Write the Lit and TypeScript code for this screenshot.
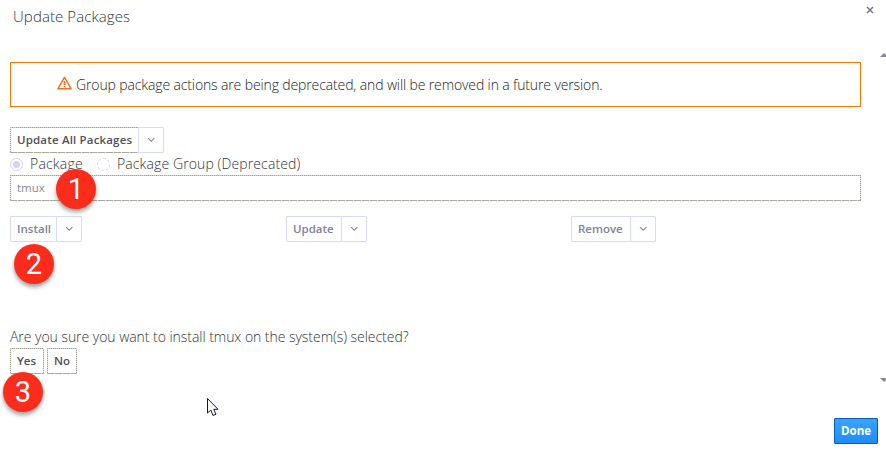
import { LitElement, html, css, svg } from "lit";
import { customElement, property } from "lit/decorators.js";

const chevron = svg`<path d="M1 1.2 L4.2 4.2 L7.4 1.2" fill="none" stroke="#8585a0" stroke-width="1.1"/>`;

const ditheredBorder = css`
  border: 0;
  background:
    repeating-linear-gradient(90deg, #a2a294 0 1px, #d0d0cc 1px 2px) top / 100% 1px no-repeat,
    repeating-linear-gradient(90deg, #aaaa9b 0 7px, #d9d9f0 7px 8px) bottom / 100% 1px no-repeat,
    repeating-linear-gradient(#a2a294 0 1px, #dcdcdc 1px 2px) left / 1px 100% no-repeat,
    repeating-linear-gradient(#a2a294 0 1px, #dcdcdc 1px 2px) right / 1px 100% no-repeat,
    #fff;
`;

@customElement("action-button")
class ActionButton extends LitElement {
  static styles = css`
    :host { display: flex; height: 26px; font: 600 11.5px "Open Sans", "Noto Sans", sans-serif; }
    .main, .caret { box-sizing: border-box; height: 26px; border: 1px solid #d9d9fb; background: #fff; display: flex; align-items: center; padding: 0; border-radius: 1px; }
    .main { width: 100%; padding: 0 0 1px 6px; color: #82829a; font: inherit; letter-spacing: var(--track, 0px); white-space: nowrap; }
    .caret { flex: 0 0 26px; margin-left: -1px; justify-content: center; }
    .strong { ${ditheredBorder} color: #505058; padding-left: 7px; }
  `;
  @property() label = "";
  @property({ type: Boolean }) strong = false;
  @property({ type: Boolean }) menu = false;
  render() {
    return html`<button class="main ${this.strong ? "strong" : ""}">${this.label}</button>
      ${this.menu ? html`<button class="caret"><svg width="9" height="6">${chevron}</svg></button>` : ""}`;
  }
}

@customElement("step-marker")
class StepMarker extends LitElement {
  static styles = css`
    :host { position: absolute; width: 40px; height: 40px; }
    .disc { width: 40px; height: 40px; border-radius: 50%; background: #fb2c1c; color: #fff; font: 29px/41px Roboto, "Liberation Sans", sans-serif; text-align: center; box-shadow: 0 3px 4px #55555590; }
  `;
  render() { return html`<div class="disc"><slot></slot></div>`; }
}

@customElement("app-root")
class AppRoot extends LitElement {
  static styles = css`
    :host { display: block; position: relative; width: 886px; height: 451px; overflow: hidden; background: #fff; color: #333338; font: 300 14px/20px "Open Sans", "Noto Sans", sans-serif; }
    .dialog { height: 451px; display: flex; flex-direction: column; }
    .header { height: 62px; box-sizing: border-box; padding: 6px 12px 0 13px; display: flex; justify-content: space-between; }
    .title { font-size: 15px; letter-spacing: 0.08px; }
    .content { width: 851px; margin-left: 10px; display: flex; flex-direction: column; }
    .warning { box-sizing: border-box; height: 45px; border: 1px solid #ec7a08; padding: 0 0 0 46px; display: flex; align-items: center; gap: 4px; color: #222; }
    .warning svg { margin-top: -3px; }
    .warntext { letter-spacing: -0.125px; }
    .all { width: 154px; margin-top: 20px; --track: 0.17px; }
    .radios { height: 22px; display: flex; align-items: center; }
    .dot { box-sizing: border-box; width: 13px; height: 13px; border: 1px dashed #d4d4f4; border-radius: 50%; display: grid; place-items: center; margin-right: 7px; }
    .on { border-style: solid; }
    .on::after { content: ""; width: 7px; height: 7px; border-radius: 50%; background: #d3d3fa; }
    .package { width: 67px; letter-spacing: 0.2px; }
    .group { letter-spacing: 0.11px; }
    .input { ${ditheredBorder} box-sizing: border-box; height: 26px; padding: 0 0 1px 7px; display: flex; align-items: center; color: #85859a; font-size: 11.5px; font-weight: 400; }
    .actions { margin-top: 15px; display: grid; grid-template-columns: 276px 285px 1fr; }
    .install { width: 72px; } .update { width: 81px; } .remove { width: 85px; }
    .question { margin-top: 85px; height: 21px; letter-spacing: -0.04px; }
    .answers { display: flex; gap: 3px; }
    .yes { width: 34px; } .no { width: 30px; }
    .done { box-sizing: border-box; width: 44px; height: 26px; margin: 44px 0 0 834px; padding: 0 0 1px; background: linear-gradient(#39a5ff, #1e8cf5); border: 1px solid #0e5cae; border-radius: 1px; color: #fff; font: 700 11.5px "Open Sans", sans-serif; }
    .first { left: 56px; top: 169px; } .second { left: 14px; top: 244px; } .third { left: 3px; top: 372px; }
    .up, .down, .cursor { position: absolute; }
    .up { left: 880px; top: 52px; } .down { left: 880px; top: 377px; } .cursor { left: 206px; top: 397px; }
  `;
  render() {
    return html`
      <div class="dialog">
        <div class="header"><span class="title">Update Packages</span>
          <svg width="8" height="8"><path d="M1 1 L7 7 M7 1 L1 7" stroke="#77778f" stroke-width="1.5"/></svg></div>
        <div class="content">
          <div class="warning"><svg width="15" height="14"><path d="M7.5 1.3 L14 12.7 H1 Z" fill="none" stroke="#f37021" stroke-width="1.5" stroke-linejoin="round"/><path d="M7.5 5 V9 M7.5 10 V11.5" stroke="#f37021" stroke-width="1.7"/></svg>
            <span class="warntext">Group package actions are being deprecated, and will be removed in a future version.</span></div>
          <action-button class="all" label="Update All Packages" strong menu></action-button>
          <div class="radios"><span class="dot on"></span><span class="package">Package</span><span class="dot"></span><span class="group">Package Group (Deprecated)</span></div>
          <div class="input">tmux</div>
          <div class="actions">
            <action-button class="install" label="Install" menu></action-button>
            <action-button class="update" label="Update" menu></action-button>
            <action-button class="remove" label="Remove" menu></action-button>
          </div>
          <div class="question"><span>Are you sure you want to install tmux on the system(s) selected?</span></div>
          <div class="answers"><action-button class="yes" label="Yes" strong></action-button><action-button class="no" label="No" strong></action-button></div>
        </div>
        <button class="done">Done</button>
      </div>
      <step-marker class="first">1</step-marker><step-marker class="second">2</step-marker><step-marker class="third">3</step-marker>
      <svg class="up" width="6" height="5"><path d="M0 5 L4 1 L8 5Z" fill="#88888f"/></svg>
      <svg class="down" width="6" height="5"><path d="M0 1 H8 L4 5Z" fill="#88888f"/></svg>
      <svg class="cursor" width="14" height="20"><path d="M1.5 1.5 V16 L4.8 13 L7 18.5 L10 17.3 L7.7 12.3 H12 Z" fill="#fff" stroke="#151530"/></svg>`;
  }
}
